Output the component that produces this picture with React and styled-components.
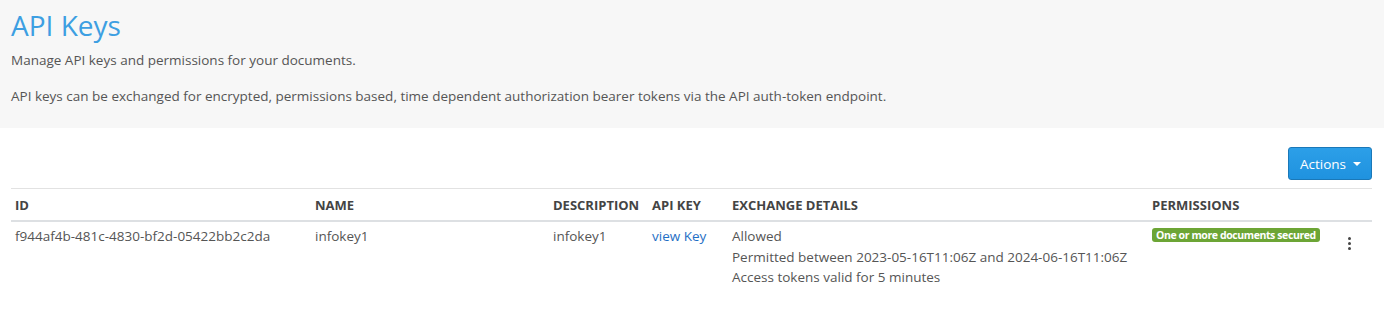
import React from 'react';
import styled, { createGlobalStyle } from 'styled-components';

const GlobalStyle = createGlobalStyle`
  body {
    margin: 0;
    background: #fff;
    font-family: "Open Sans", "Noto Sans", sans-serif;
    color: #555;
  }
`;

const Header = styled.div`
  background: #f7f7f7;
  padding: 6px 11px 0 11px;
  height: 122px;
`;

const Title = styled.h1`
  margin: 0;
  color: #3d9fe2;
  font-size: 28px;
  font-weight: 400;
  line-height: 38px;
`;

const Lead = styled.p`
  margin: ${p => p.$top || 0}px 0 0 0;
  font-size: 13.5px;
  line-height: 20px;
  color: #555;
`;

const Content = styled.div`
  padding: 19px 12px 0 11px;
`;

const Toolbar = styled.div`
  display: flex;
  justify-content: flex-end;
  margin-bottom: 8px;
`;

const ActionsButton = styled.button`
  display: flex;
  align-items: center;
  gap: 7px;
  height: 33px;
  padding: 0 10px 0 11px;
  background: linear-gradient(#2c9fe8, #1f92df);
  border: 1px solid #1a78b8;
  border-radius: 3px;
  color: #fff;
  font-family: inherit;
  font-size: 13.5px;
`;

const Caret = styled.span`
  width: 0;
  height: 0;
  border-left: 4px solid transparent;
  border-right: 4px solid transparent;
  border-top: 4px solid #fff;
`;

const Table = styled.table`
  width: 100%;
  border-collapse: collapse;
  table-layout: fixed;
  font-size: 13.5px;
`;

const Th = styled.th`
  box-sizing: border-box;
  text-align: left;
  text-transform: uppercase;
  font-weight: 700;
  font-size: 13px;
  color: #444;
  padding: 7px 4px 6px 4px;
  border-top: 1px solid #e2e2e2;
  border-bottom: 2px solid #dde0e3;
  white-space: nowrap;
  width: ${p => p.$w ? `${p.$w}px` : 'auto'};
`;

const Td = styled.td`
  vertical-align: top;
  padding: 4px 4px 6px 4px;
  line-height: 20.5px;
  color: #555;
  white-space: nowrap;
`;

const KeyLink = styled.a`
  color: #1f6fc5;
  text-decoration: none;
`;

const Badge = styled.span`
  display: inline-block;
  background: #6ca535;
  color: #fff;
  font-size: 10.5px;
  font-weight: 700;
  line-height: 14px;
  padding: 0 4px;
  border-radius: 3px;
  letter-spacing: -0.4px;
  vertical-align: top;
  margin-top: 2px;
`;

const Kebab = styled.span`
  display: flex;
  flex-direction: column;
  align-items: center;
  gap: 2px;
  padding-top: 11px;
  padding-right: 6px;
  span {
    width: 3px;
    height: 3px;
    border-radius: 50%;
    background: #444;
  }
`;

const rows = [
  {
    id: 'f944af4b-481c-4830-bf2d-05422bb2c2da',
    name: 'infokey1',
    description: 'infokey1',
    details: [
      'Allowed',
      'Permitted between 2023-05-16T11:06Z and 2024-06-16T11:06Z',
      'Access tokens valid for 5 minutes',
    ],
    permission: 'One or more documents secured',
  },
];

export default function App() {
  return (
    <>
      <GlobalStyle />
      <Header>
        <Title>API Keys</Title>
        <Lead $top={6}>Manage API keys and permissions for your documents.</Lead>
        <Lead $top={16}>
          API keys can be exchanged for encrypted, permissions based, time dependent authorization bearer tokens via the API auth-token endpoint.
        </Lead>
      </Header>
      <Content>
        <Toolbar>
          <ActionsButton>
            Actions <Caret />
          </ActionsButton>
        </Toolbar>
        <Table>
          <thead>
            <tr>
              <Th $w={300}>ID</Th>
              <Th $w={238}>Name</Th>
              <Th $w={99}>Description</Th>
              <Th $w={80}>API Key</Th>
              <Th $w={420}>Exchange Details</Th>
              <Th>Permissions</Th>
              <Th $w={40}></Th>
            </tr>
          </thead>
          <tbody>
            {rows.map(r => (
              <tr key={r.id}>
                <Td>{r.id}</Td>
                <Td>{r.name}</Td>
                <Td>{r.description}</Td>
                <Td><KeyLink href="#">view Key</KeyLink></Td>
                <Td>
                  {r.details.map(d => <div key={d}>{d}</div>)}
                </Td>
                <Td><Badge>{r.permission}</Badge></Td>
                <Td>
                  <Kebab><span /><span /><span /></Kebab>
                </Td>
              </tr>
            ))}
          </tbody>
        </Table>
      </Content>
    </>
  );
}
